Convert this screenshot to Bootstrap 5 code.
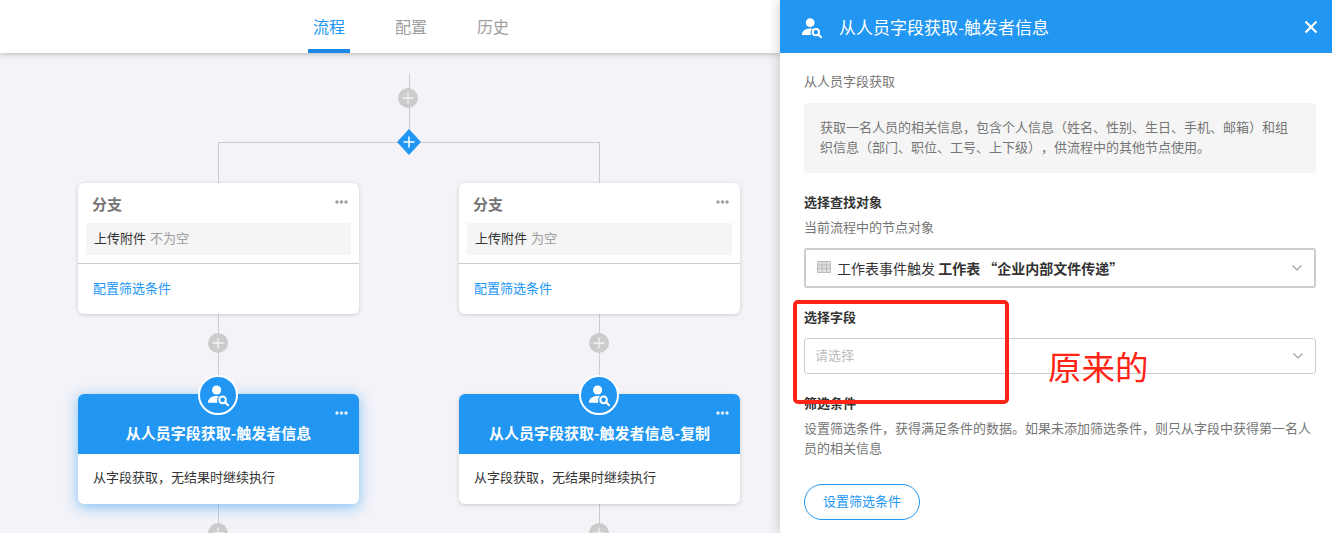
<!doctype html>
<html lang="zh-CN">
<head>
<meta charset="utf-8">
<title>工作流</title>
<link href="https://cdn.jsdelivr.net/npm/bootstrap@5.3.0/dist/css/bootstrap.min.css" rel="stylesheet">
<style>
html,body{height:533px;overflow:hidden}
body{font-family:"Noto Sans CJK SC","Liberation Sans",sans-serif;font-size:13px;line-height:20px;color:#333;background:#f3f3f8;text-spacing-trim:space-all}
.shell{height:533px}
.leftside{width:780px;flex:none}
.tabbar{height:53px;background:#fff;box-shadow:0 1px 6px rgba(0,0,0,.25);padding-left:308px;gap:40px;position:relative;z-index:2}
.tabitem{width:42px;height:53px;font-size:16px;line-height:52px;text-align:center;color:#9e9e9e}
.tabitem.on{color:#2196f3;border-bottom:4px solid #1e88e5}
.stage{height:480px;padding:20px 0 0 78px}
.flowbox{width:662px}
.conn{background:linear-gradient(#ccc,#ccc) center/1px 100% no-repeat;display:flex;justify-content:center}
.c-top{height:69px;padding-top:15px}
.c-top .plusdot{margin-right:2px}
.c-mid{height:80px;padding-top:19px}
.c-end{height:40px;padding-top:19px}
.plusdot{width:20px;height:20px;display:block;margin-right:1px}
.frame{width:382px;height:41px;border:1px solid #ccc;border-bottom:0;position:relative}
.diamond{position:absolute;left:50%;top:-14px;margin-left:-13.5px;width:26px;height:26px;display:block}
.branchrow{gap:100px}
.brcol{width:281px}
.nodecard{background:#fff;border-radius:6px;box-shadow:0 1px 4px rgba(0,0,0,.16);position:relative}
.card-a{height:131px}
.brhead{height:40px;padding:11px 14px 0;font-size:15px;line-height:20px;font-weight:700;color:#757575}
.condbox{margin:0 8px;height:32px;background:#f5f5f5;line-height:29px;padding-left:8px}
.condbox span{color:#9e9e9e;margin-left:4px}
.rule{height:1px;background:#ccc;margin-top:8px}
.cfglink{color:#2196f3;padding:14px 15px 0;text-decoration:none;display:block}
.dots{position:absolute;right:11px;top:17px;width:13px;height:4px;display:block}
.card-b{height:110px}
.card-b.glow{box-shadow:0 3px 14px rgba(33,150,243,.55)}
.bluehead{height:60px;background:#2196f3;border-radius:6px 6px 0 0;color:#fff;font-size:15px;font-weight:700;text-align:center;line-height:20px;padding-top:29px}
.bluebody{padding:13px 15px 0}
.roundicon{position:absolute;left:50%;top:-19px;margin-left:-21px;width:40px;height:40px;border:2px solid #fff;border-radius:50%;background:#2196f3}
.roundicon svg{width:22px;height:22px;display:block;margin:7px 0 0 7px}
.panel{width:552px;flex:none;background:#fff;box-shadow:0 0 12px rgba(0,0,0,.22);position:relative;z-index:3;height:533px;overflow:hidden}
.panelhead{height:53px;background:#2196f3;color:#fff;font-size:17px;padding:0 14px 0 21px}
.panelhead svg.who{width:21px;height:21px;margin-right:17px;margin-top:1px}
.panelhead span{line-height:50px}
.closer{margin-left:auto;width:14px;height:14px;display:block}
.panelbody{padding:18px 16px 0 24px}
.muted1{color:#757575}
.notebox{margin-top:12px;height:70px;padding:14px 16px 0;background:#f5f5f5;border-radius:3px;color:#757575}
.lab{font-weight:700;color:#333}
.m19{margin-top:19px}
.m5{margin-top:5px}
.fakeselect{margin-top:11px;border:1px solid #ccc;border-radius:3px;padding:0 11px 0 10px;height:36px}
.fakeselect.thick{height:40px;border:2px solid #ccc;padding:0 11px 0 11px;font-size:14px}
.fakeselect svg.arrow{margin-left:auto;width:12px;height:8px}
.fakeselect svg.grid{width:14px;height:12px;margin-right:6px;margin-top:-3px}
.hint{color:#bdbdbd;line-height:18px;margin-bottom:3px}
.pillbtn{margin-top:26px;width:116px;height:36px;border:1px solid #2196f3;border-radius:18px;color:#2196f3;background:#fff;font-size:13px;line-height:20px;padding:6px 0 8px}
.pillbtn:hover{color:#2196f3;background:#fff;border-color:#2196f3}
.redbox{position:absolute;left:13px;top:300px;width:216px;height:104px;border:4px solid #ff2416;border-radius:5px;pointer-events:none}
.redtext{position:absolute;left:268px;top:343px;font-size:33.5px;line-height:46px;color:#ff2416;white-space:nowrap}
</style>
</head>
<body>
<svg width="0" height="0" class="d-block position-absolute">
  <symbol id="who" viewBox="0 0 24 24">
    <circle cx="10.5" cy="6.5" r="5" fill="#fff"/>
    <path d="M1 20.5c0-4.600 4-7.500 9.500-7.500 1 0 1.800.1 2.500.3a6.500 6.500 0 0 0-1.500 7.200z" fill="#fff"/>
    <circle cx="17" cy="17.300" r="3.600" fill="none" stroke="#fff" stroke-width="2.200"/>
    <path d="M19.800 20l3.200 3.200" stroke="#fff" stroke-width="2.400" stroke-linecap="round"/>
  </symbol>
  <symbol id="plus" viewBox="0 0 20 20">
    <circle cx="10" cy="10" r="10" fill="#ccc"/>
    <path d="M10 4.500v11M4.500 10h11" stroke="#f3f3f8" stroke-width="1.300"/>
  </symbol>
  <symbol id="dotrow" viewBox="0 0 13 4">
    <circle cx="2" cy="2" r="1.700"/><circle cx="6.500" cy="2" r="1.700"/><circle cx="11" cy="2" r="1.700"/>
  </symbol>
</svg>
<div class="shell d-flex">
  <div class="leftside">
    <div class="tabbar d-flex">
      <div class="tabitem on">流程</div>
      <div class="tabitem">配置</div>
      <div class="tabitem">历史</div>
    </div>
    <div class="stage overflow-hidden">
      <div class="flowbox">
        <div class="conn c-top"><svg class="plusdot"><use href="#plus"/></svg></div>
        <div class="frame mx-auto">
          <svg class="diamond" viewBox="0 0 26 26"><path d="M13 0l12 13-12 13L1 13z" fill="#2196f3"/><path d="M13 7.500v11M7.500 13h11" stroke="#fff" stroke-width="1.500"/></svg>
        </div>
        <div class="branchrow d-flex">
          <div class="brcol">
            <div class="nodecard card-a">
              <div class="brhead">分支</div>
              <svg class="dots" fill="#9e9e9e"><use href="#dotrow"/></svg>
              <div class="condbox">上传附件<span>不为空</span></div>
              <div class="rule"></div>
              <a class="cfglink" href="#">配置筛选条件</a>
            </div>
            <div class="conn c-mid"><svg class="plusdot"><use href="#plus"/></svg></div>
            <div class="nodecard card-b glow">
              <div class="bluehead">从人员字段获取-触发者信息</div>
              <div class="roundicon"><svg><use href="#who"/></svg></div>
              <svg class="dots" fill="#e3f2fd"><use href="#dotrow"/></svg>
              <div class="bluebody">从字段获取，无结果时继续执行</div>
            </div>
            <div class="conn c-end"><svg class="plusdot"><use href="#plus"/></svg></div>
          </div>
          <div class="brcol">
            <div class="nodecard card-a">
              <div class="brhead">分支</div>
              <svg class="dots" fill="#9e9e9e"><use href="#dotrow"/></svg>
              <div class="condbox">上传附件<span>为空</span></div>
              <div class="rule"></div>
              <a class="cfglink" href="#">配置筛选条件</a>
            </div>
            <div class="conn c-mid"><svg class="plusdot"><use href="#plus"/></svg></div>
            <div class="nodecard card-b">
              <div class="bluehead">从人员字段获取-触发者信息-复制</div>
              <div class="roundicon"><svg><use href="#who"/></svg></div>
              <svg class="dots" fill="#e3f2fd"><use href="#dotrow"/></svg>
              <div class="bluebody">从字段获取，无结果时继续执行</div>
            </div>
            <div class="conn c-end"><svg class="plusdot"><use href="#plus"/></svg></div>
          </div>
        </div>
      </div>
    </div>
  </div>
  <aside class="panel">
    <div class="panelhead d-flex align-items-center">
      <svg class="who"><use href="#who"/></svg>
      <span>从人员字段获取-触发者信息</span>
      <svg class="closer" viewBox="0 0 14 14"><path d="M1.500 1.500l11 11M12.500 1.500l-11 11" stroke="#fff" stroke-width="2.200"/></svg>
    </div>
    <div class="panelbody">
      <div class="muted1">从人员字段获取</div>
      <div class="notebox">获取一名人员的相关信息，包含个人信息（姓名、性别、生日、手机、邮箱）和组织信息（部门、职位、工号、上下级），供流程中的其他节点使用。</div>
      <div class="lab m19">选择查找对象</div>
      <div class="muted1 m5">当前流程中的节点对象</div>
      <div class="fakeselect thick d-flex align-items-center">
        <svg class="grid" viewBox="0 0 14 12"><path d="M.5.500h13v11H.5z" fill="#e0e0e0"/><path d="M.5.500h13v11H.5zM.5 4h13M.5 7.500h13M5 .5v11M9.500.5v11" fill="none" stroke="#bdbdbd"/></svg>
        <span>工作表事件触发</span><span class="fw-bold">&nbsp;工作表 “企业内部文件传递”</span>
        <svg class="arrow" viewBox="0 0 12 8"><path d="M1.500 1.500L6 6l4.500-4.500" fill="none" stroke="#9e9e9e" stroke-width="1.200"/></svg>
      </div>
      <div class="lab m19">选择字段</div>
      <div class="fakeselect d-flex align-items-center">
        <span class="hint">请选择</span>
        <svg class="arrow" viewBox="0 0 12 8"><path d="M1.500 1.500L6 6l4.500-4.500" fill="none" stroke="#9e9e9e" stroke-width="1.200"/></svg>
      </div>
      <div class="lab m19">筛选条件</div>
      <div class="muted1 m5">设置筛选条件，获得满足条件的数据。如果未添加筛选条件，则只从字段中获得第一名人员的相关信息</div>
      <button type="button" class="btn pillbtn d-block">设置筛选条件</button>
    </div>
    <div class="redbox"></div>
    <div class="redtext">原来的</div>
  </aside>
</div>
<script src="https://cdn.jsdelivr.net/npm/bootstrap@5.3.0/dist/js/bootstrap.bundle.min.js"></script>
</body>
</html>
